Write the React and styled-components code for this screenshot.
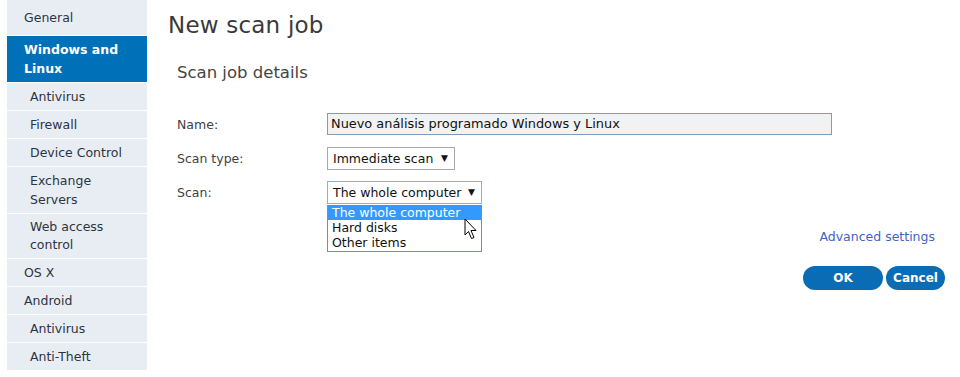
import React from "react";
import styled, { createGlobalStyle } from "styled-components";

const Global = createGlobalStyle`
  html, body { margin: 0; padding: 0; background: #fff; }
  body { font-family: "DejaVu Sans", "Noto Sans", sans-serif; color: #333; }
  * { box-sizing: border-box; }
`;

const Page = styled.div`
  display: flex;
  width: 960px;
  height: 377px;
  padding-left: 7px;
  overflow: hidden;
`;

const Sidebar = styled.nav`
  width: 140px;
  flex: 0 0 140px;
  background: #e8edf4;
  align-self: flex-start;
`;

const NavItem = styled.div`
  font-size: 12.5px;
  line-height: ${(p) => (p.$tight ? "18px" : "19px")};
  padding: ${(p) => (p.$first ? "8px" : "4px")} 6px ${(p) => (p.$first ? "8px" : "4px")} ${(p) => (p.$sub ? "23px" : "17px")};
  border-bottom: 1px solid #fff;
  background: ${(p) => (p.$active ? "#0070b9" : "#e8edf4")};
  color: ${(p) => (p.$active ? "#fff" : "#2c3440")};
  font-weight: ${(p) => (p.$active ? 700 : 400)};
`;

const Main = styled.main`
  flex: 1;
  padding: 10px 15px 0 21px;
  display: flex;
  flex-direction: column;
`;

const Title = styled.h1`
  margin: 0;
  font-size: 23px;
  font-weight: 400;
  line-height: 30px;
  color: #3a3a3a;
  letter-spacing: 0.2px;
`;

const Subtitle = styled.h2`
  margin: 22px 0 0 9px;
  font-size: 16.5px;
  font-weight: 400;
  line-height: 22px;
  color: #444;
`;

const Form = styled.div`
  margin: 29px 0 0 9px;
  display: flex;
  flex-direction: column;
  gap: 12px;
`;

const Row = styled.div`
  display: flex;
  align-items: center;
  height: 22px;
`;

const Label = styled.label`
  width: 150px;
  font-size: 12.5px;
  color: #3f3f3f;
`;

const TextInput = styled.div`
  width: 505px;
  height: 22px;
  border: 1px solid #7f9db9;
  background: #f2f2f2;
  font-size: 12.9px;
  line-height: 20px;
  padding-left: 3px;
  color: #111;
`;

const SelectWrap = styled.div`
  position: relative;
`;

const Select = styled.div`
  width: ${(p) => p.$w}px;
  height: 23px;
  border: 1px solid ${(p) => (p.$focus ? "#7eb4ea" : "#a9a9a9")};
  background: #fff;
  font-size: 12.5px;
  line-height: 21px;
  padding-left: 5px;
  color: #111;
  display: flex;
  justify-content: space-between;
  padding-right: 6px;
`;

const Arrow = styled.span`
  font-size: 9px;
`;

const List = styled.div`
  position: absolute;
  top: 24px;
  left: 0;
  width: 155px;
  border: 1px solid #7a8ea6;
  border-top: none;
  background: #fff;
  z-index: 2;
  padding-bottom: 1px;
`;

const Option = styled.div`
  font-size: 12.5px;
  line-height: 15px;
  padding-left: 4px;
  background: ${(p) => (p.$sel ? "#3399ff" : "#fff")};
  color: ${(p) => (p.$sel ? "#fff" : "#111")};
`;

const Cursor = styled.svg`
  position: absolute;
  left: 137px;
  top: 37px;
  z-index: 3;
`;

const Footer = styled.div`
  margin-top: 26px;
  display: flex;
  flex-direction: column;
  align-items: flex-end;
`;

const Link = styled.a`
  font-size: 12.5px;
  color: #3f63c6;
  margin-right: 10px;
  text-decoration: none;
`;

const Buttons = styled.div`
  margin-top: 22px;
  display: flex;
  gap: 3px;
`;

const Button = styled.button`
  height: 24px;
  width: ${(p) => p.$w}px;
  border: none;
  border-radius: 12px;
  background: #0a6cb5;
  color: #fff;
  font-family: inherit;
  font-size: 12px;
  font-weight: 700;
  padding: 0;
`;

const nav = [
  { t: "General", first: true },
  { t: "Windows and Linux", active: true },
  { t: "Antivirus", sub: true },
  { t: "Firewall", sub: true },
  { t: "Device Control", sub: true },
  { t: "Exchange Servers", sub: true },
  { t: "Web access control", sub: true, tight: true },
  { t: "OS X" },
  { t: "Android" },
  { t: "Antivirus", sub: true },
  { t: "Anti-Theft", sub: true },
];

export default function App() {
  return (
    <>
      <Global />
      <Page>
        <Sidebar>
          {nav.map((n, i) => (
            <NavItem key={i} $first={n.first} $active={n.active} $sub={n.sub} $tight={n.tight}>
              {n.t}
            </NavItem>
          ))}
        </Sidebar>
        <Main>
          <Title>New scan job</Title>
          <Subtitle>Scan job details</Subtitle>
          <Form>
            <Row>
              <Label>Name:</Label>
              <TextInput>Nuevo análisis programado Windows y Linux</TextInput>
            </Row>
            <Row>
              <Label>Scan type:</Label>
              <Select $w={128}>
                Immediate scan <Arrow>▼</Arrow>
              </Select>
            </Row>
            <Row>
              <Label>Scan:</Label>
              <SelectWrap>
                <Select $w={155} $focus>
                  The whole computer <Arrow>▼</Arrow>
                </Select>
                <List>
                  <Option $sel>The whole computer</Option>
                  <Option>Hard disks</Option>
                  <Option>Other items</Option>
                </List>
                <Cursor width="14" height="22" viewBox="0 0 14 22">
                  <path
                    d="M1 1 L1 17 L4.5 13.5 L7.5 20.5 L10 19.5 L7 12.5 L12 12.5 Z"
                    fill="#fff"
                    stroke="#000"
                    strokeWidth="1"
                    strokeLinejoin="miter"
                  />
                </Cursor>
              </SelectWrap>
            </Row>
          </Form>
          <Footer>
            <Link href="#">Advanced settings</Link>
            <Buttons>
              <Button $w={80}>OK</Button>
              <Button $w={59}>Cancel</Button>
            </Buttons>
          </Footer>
        </Main>
      </Page>
    </>
  );
}
